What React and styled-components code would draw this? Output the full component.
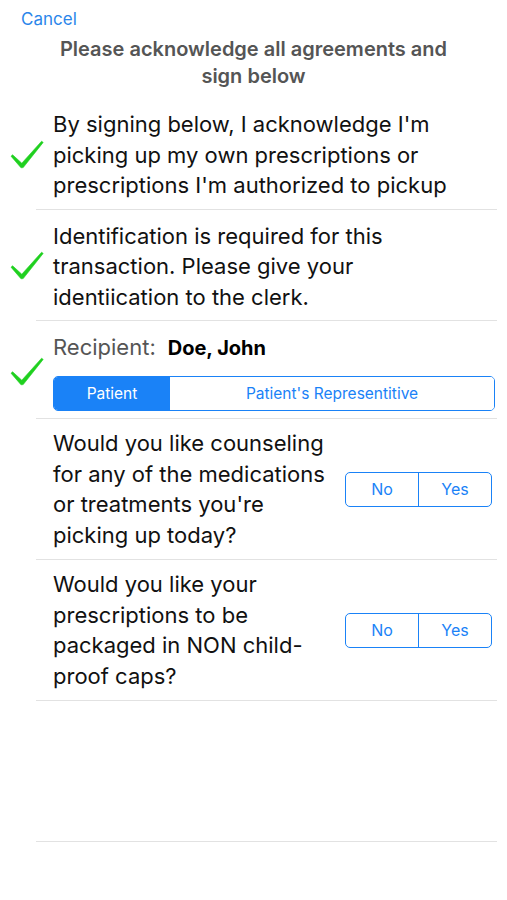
import React from 'react';
import styled, { createGlobalStyle } from 'styled-components';

const GlobalStyle = createGlobalStyle`
  body {
    margin: 0;
    background: #fff;
    font-family: Inter, "Liberation Sans", sans-serif;
  }
`;

const Screen = styled.div`
  width: 507px;
  height: 900px;
  background: #fff;
  display: flex;
  flex-direction: column;
`;

const TopBar = styled.div`
  padding: 9px 0 0 21px;
  height: 24px;
`;

const CancelLink = styled.span`
  color: #2a86ea;
  font-size: 17px;
`;

const Title = styled.h1`
  margin: 0;
  padding: 3px 30px 0;
  text-align: center;
  color: #555;
  font-size: 20px;
  font-weight: 600;
  line-height: 27px;
`;

const List = styled.div`
  display: flex;
  flex-direction: column;
  margin-top: 8px;
`;

const Row = styled.div`
  display: flex;
  align-items: center;
  padding: ${p => p.$pad || '11px 12px 8px 10px'};
`;

const CheckCell = styled.div`
  width: 43px;
  flex: none;
  display: flex;
  align-items: center;
  justify-content: flex-start;
  visibility: ${p => (p.$hidden ? 'hidden' : 'visible')};
`;

const Body = styled.div`
  flex: 1;
  min-width: 0;
`;

const Text = styled.div`
  color: #111;
  font-size: 22px;
  line-height: 30.5px;
  width: ${p => p.$width || 'auto'};
`;

const Divider = styled.div`
  height: 1px;
  background: #e2e2e2;
  margin: 0 10px 0 36px;
`;

const RecipientLine = styled.div`
  display: flex;
  align-items: baseline;
  gap: 12px;
  height: 30px;
  line-height: 30px;
`;

const RecipientLabel = styled.span`
  color: #555;
  font-size: 22px;
`;

const RecipientName = styled.span`
  color: #000;
  font-size: 20px;
  font-weight: 700;
`;

const Segmented = styled.div`
  margin-top: 14px;
  display: flex;
  height: 33px;
  border: 1.5px solid #1a82f7;
  border-radius: 5px;
  overflow: hidden;
`;

const Segment = styled.div`
  flex: ${p => (p.$grow ? 1 : 'none')};
  width: ${p => (p.$grow ? 'auto' : '116px')};
  display: flex;
  align-items: center;
  justify-content: center;
  font-size: 15.5px;
  background: ${p => (p.$active ? '#1a82f7' : '#fff')};
  color: ${p => (p.$active ? '#fff' : '#1a82f7')};
`;

const Question = styled.div`
  display: flex;
  align-items: center;
  justify-content: space-between;
`;

const Toggle = styled.div`
  display: flex;
  width: 147px;
  height: 35px;
  border: 1.5px solid #1a82f7;
  border-radius: 5px;
  box-sizing: border-box;
  overflow: hidden;
`;

const ToggleOption = styled.div`
  flex: 1;
  display: flex;
  align-items: center;
  justify-content: center;
  color: #1a82f7;
  font-size: 16px;
  & + & {
    border-left: 1.5px solid #1a82f7;
  }
`;

const SignatureArea = styled.div`
  height: 140px;
`;

// brush-like tick, thicker at the bend
const Check = () => (
  <svg width="34" height="30" viewBox="0 0 34 30">
    <path
      d="M1 16.2 L2.6 14.8 L11.8 23.2 L31.6 1.2 L33.2 2.4 L13.2 27.6 L11 27.8 Z"
      fill="#1fd01f"
      stroke="#1fd01f"
      strokeWidth="0.6"
      strokeLinejoin="round"
    />
  </svg>
);

const YesNo = () => (
  <Toggle>
    <ToggleOption>No</ToggleOption>
    <ToggleOption>Yes</ToggleOption>
  </Toggle>
);

export default function App() {
  return (
    <Screen>
      <GlobalStyle />
      <TopBar>
        <CancelLink>Cancel</CancelLink>
      </TopBar>
      <Title>
        Please acknowledge all agreements and
        <br />
        sign below
      </Title>
      <List>
        <Row>
          <CheckCell>
            <Check />
          </CheckCell>
          <Body>
            <Text $width="405px">
              By signing below, I acknowledge I'm picking up my own prescriptions or
              prescriptions I'm authorized to pickup
            </Text>
          </Body>
        </Row>
        <Divider />
        <Row>
          <CheckCell>
            <Check />
          </CheckCell>
          <Body>
            <Text $width="340px">
              Identification is required for this transaction. Please give your
              identiication to the clerk.
            </Text>
          </Body>
        </Row>
        <Divider />
        <Row $pad="11px 12px 7px 10px">
          <CheckCell>
            <Check />
          </CheckCell>
          <Body>
            <RecipientLine>
              <RecipientLabel>Recipient:</RecipientLabel>
              <RecipientName>Doe, John</RecipientName>
            </RecipientLine>
            <Segmented>
              <Segment $active>Patient</Segment>
              <Segment $grow>Patient's Representitive</Segment>
            </Segmented>
          </Body>
        </Row>
        <Divider />
        <Row $pad="9px 15px 9px 10px">
          <CheckCell $hidden />
          <Body>
            <Question>
              <Text $width="285px">
                Would you like counseling for any of the medications or treatments
                you're picking up today?
              </Text>
              <YesNo />
            </Question>
          </Body>
        </Row>
        <Divider />
        <Row $pad="9px 15px 9px 10px">
          <CheckCell $hidden />
          <Body>
            <Question>
              <Text $width="270px">
                Would you like your prescriptions to be packaged in NON child-proof
                caps?
              </Text>
              <YesNo />
            </Question>
          </Body>
        </Row>
        <Divider />
        <SignatureArea />
        <Divider />
      </List>
    </Screen>
  );
}
